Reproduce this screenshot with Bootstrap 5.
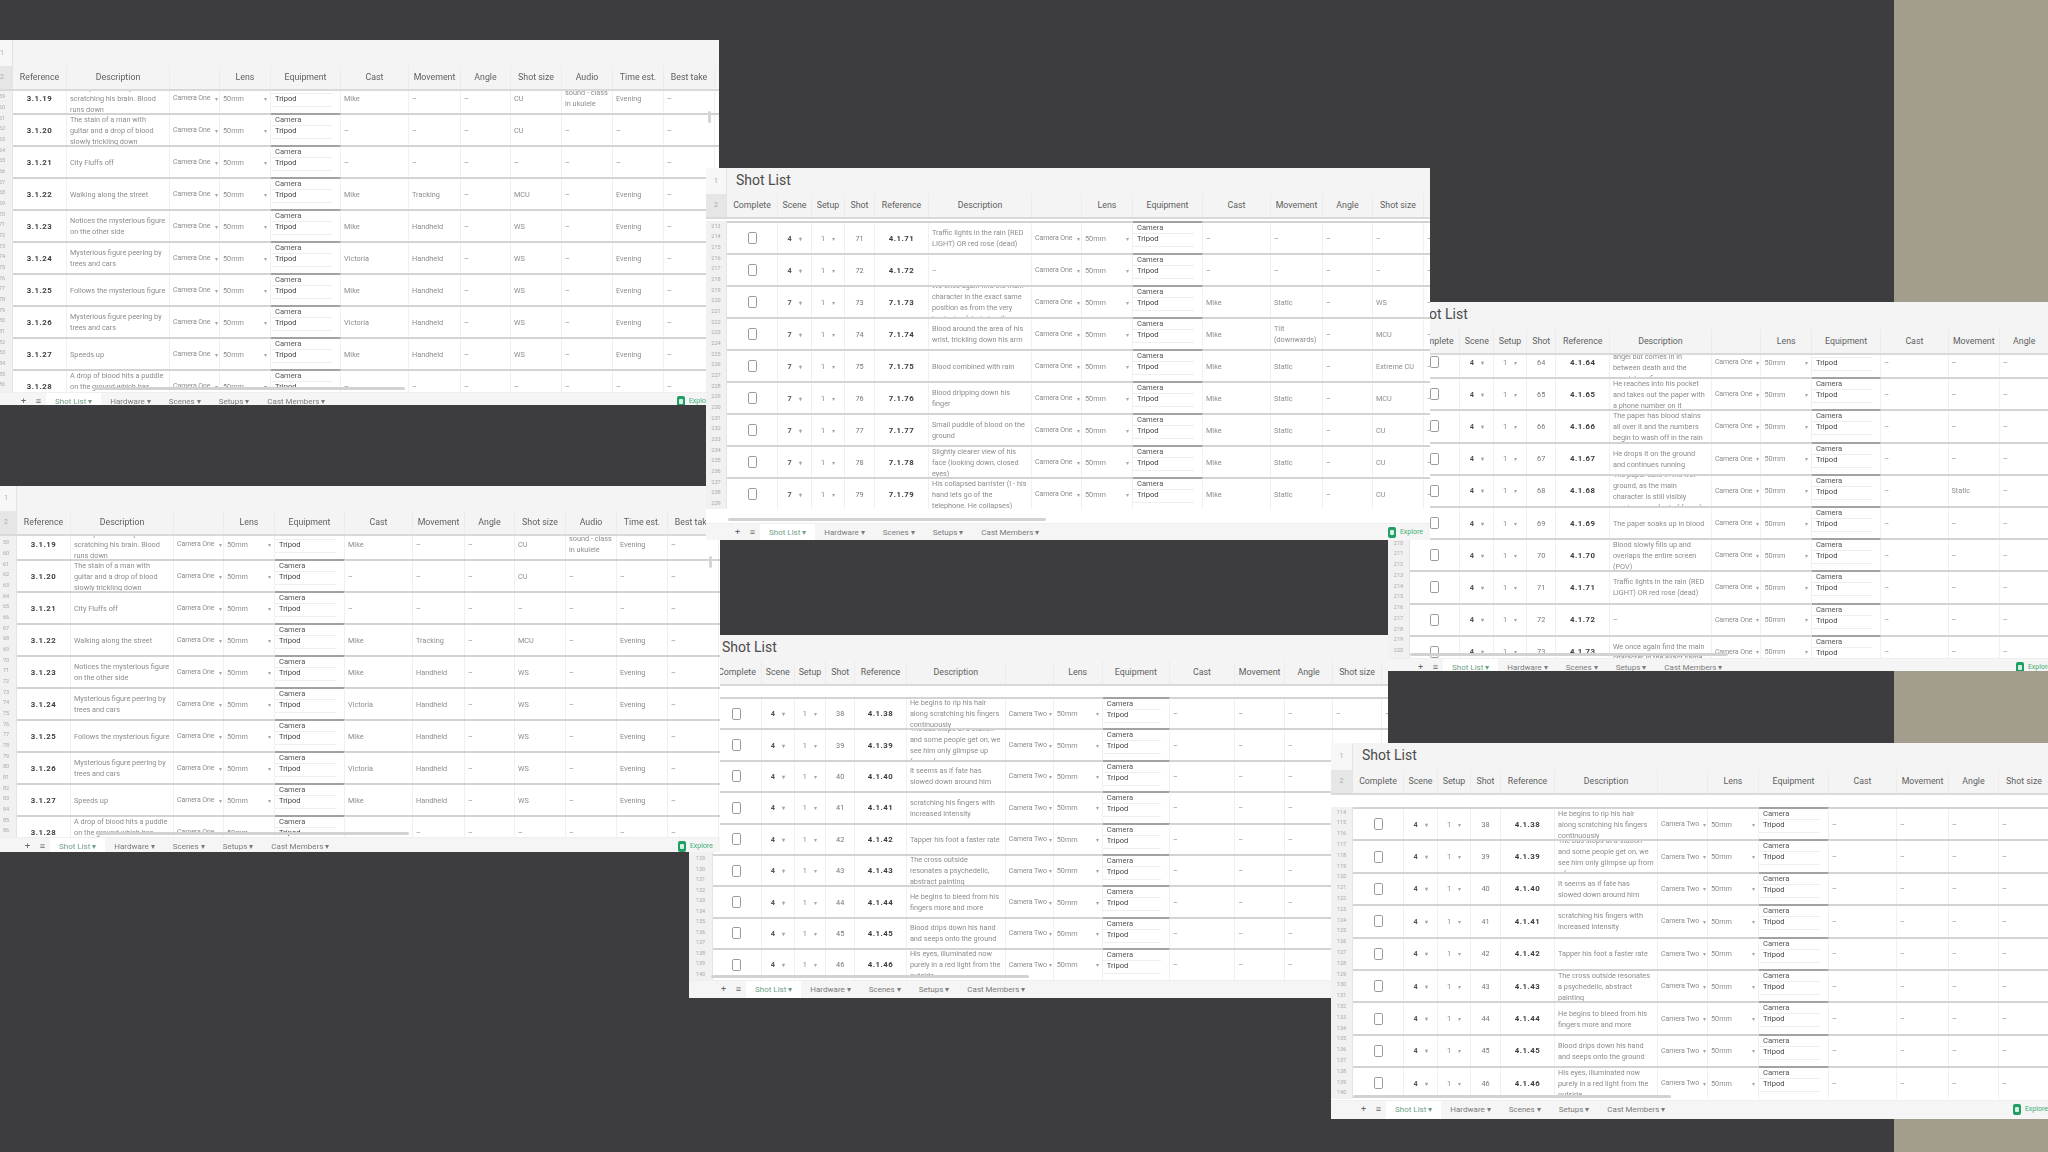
<!doctype html>
<html lang="en">
<head>
<meta charset="utf-8">
<title>Shot List</title>
<link href="https://cdn.jsdelivr.net/npm/bootstrap@5.3.0/dist/css/bootstrap.min.css" rel="stylesheet">
<style>
html,body{height:100%}
body{background:#3d3d3f;font-family:Roboto,"Liberation Sans",sans-serif;overflow:hidden}
.desk{width:2048px;height:1152px;position:relative;overflow:hidden}
.tan-band{position:absolute;left:1894px;top:0;width:154px;height:1152px;background:#a39d8d}
.win{position:absolute;background:#fff;overflow:hidden;display:flex;flex-direction:column;filter:blur(.65px);--u:1;--pitch:32px;--title:26px;--head:25px;--off:2px;--bar:17px;--rn:21px}
.w1{left:-8px;top:40px;width:727px;height:365px;z-index:1;--off:-10px;--bar:13px;--title:26px;--head:25px}
.w2{left:706px;top:168px;width:724px;height:372px;z-index:6}
.w3{left:1388px;top:302px;width:670px;height:369px;z-index:3;--u:.99;--pitch:32.2px;--title:27px;--head:26px;--off:-10px;--bar:13px;--rn:22px}
.w4{left:-4px;top:486px;width:724px;height:366px;z-index:4;--off:-9px;--bar:15px;--title:25px}
.w5{left:689px;top:635px;width:699px;height:363px;z-index:2;--u:.96;--pitch:31.4px;--title:26px;--off:11px;--bar:18px;--rn:24px}
.w6{left:1331px;top:743px;width:724px;height:376px;z-index:5;--pitch:32.4px;--title:27px;--off:12px;--bar:19px;--rn:22px}
.win-title,.win-head{display:flex;flex:none;background:#f4f4f4}
.win-title{height:var(--title)}
.win-head{height:var(--head);border-bottom:2px solid #d9d9d9}
.rn{flex:none;width:var(--rn);background:#f1f1f1;border-right:1px solid #e4e4e4;display:flex;flex-direction:column;align-items:center;justify-content:space-around;font-size:5.5px;line-height:1;color:#aaa}
.win-head .rn{background:#e6e6e6;font-size:7px}
.win-title .rn{background:#f7f7f7;font-size:7px}
.title-text{font-size:14px;line-height:1;color:#4b4b4b;padding:5px 0 0 9px;margin:0;font-weight:400;white-space:nowrap}
.w3 .title-text{padding-left:3px}
.cl{flex:none;border-right:1px solid #f0f0f0;font-size:7.3px;line-height:11px;color:#8d8d8d;overflow:hidden;display:flex;align-items:center;padding:0 3px}
.win-head .cl{font-size:8.8px;color:#5f5f5f;justify-content:center;padding:0;border-right-color:#ececec;white-space:nowrap}
.c-complete{width:calc(var(--u)*51px)}
.c-scene{width:calc(var(--u)*34px)}
.c-setup{width:calc(var(--u)*33px)}
.c-shot{width:calc(var(--u)*30px)}
.c-ref{width:calc(var(--u)*54px)}
.c-desc{width:calc(var(--u)*103px)}
.c-cam{width:calc(var(--u)*50px)}
.c-lens{width:calc(var(--u)*51px)}
.c-equip{width:calc(var(--u)*70px)}
.c-cast{width:calc(var(--u)*68px)}
.c-move{width:calc(var(--u)*52px)}
.c-angle{width:calc(var(--u)*50px)}
.c-size,.c-audio,.c-time,.c-best{width:calc(var(--u)*51px)}
.win-body{flex:1 1 0;min-height:0;overflow:hidden;position:relative}
.win-rows{margin-top:var(--off)}
.sheet-row{display:flex;height:var(--pitch);border-top:2px solid #d3d3d3}
.sheet-row .rn{margin-top:-2px}
.win-body .c-ref{color:#3d3d3d;font-weight:700;justify-content:center;font-size:7.8px;letter-spacing:.5px}
.win-body .c-scene,.win-body .c-setup{justify-content:center;gap:7px;color:#555;font-weight:700}
.win-body .c-setup{font-weight:400;color:#888}
.win-body .c-shot{justify-content:center;color:#777}
.win-body .c-complete{justify-content:center}
.win-body .c-cam,.win-body .c-lens{white-space:nowrap;justify-content:space-between;padding:0 3px}
.win-body .c-cam{padding-right:1px}
.win-body .c-cam span:first-child{font-size:7px;line-height:11px;letter-spacing:-.1px;padding-top:1px}
.drop{font-size:6px;color:#a5a5a5}
.tick{width:9px;height:12px;margin:0;border:1px solid #9a9a9a;border-radius:2px;background:#fff;flex:none}
.win-body .c-equip{flex-direction:column;align-items:stretch;justify-content:flex-start;padding:0;margin-top:-2px;border-top:2px solid #a2a2a2;color:#555;font-size:7.6px;line-height:8px}
.eq-top{padding:1px 4px 1px}
.eq-low{padding:1px 4px 3px;border-top:1px solid #eee;border-bottom:1px solid #eee;color:#444;margin-right:8px}
.win-bar{flex:none;height:var(--bar);overflow:hidden;background:#f5f5f5;border-top:1px solid #efefef}
.tab-strip{display:flex;height:18px;align-items:stretch;font-size:8px;color:#7b7b7b;white-space:nowrap;padding-left:calc(var(--rn) + 3px)}
.bar-icon{width:15px;text-align:center;line-height:17px;color:#666;font-size:9px}
.sheet-tab{padding:0 9px;line-height:17px}
.sheet-tab:first-of-type{margin-left:8px}
.sheet-tab.on{background:#fff;color:#6f9f86}
.explore{margin-left:auto;display:flex;align-items:center;gap:4px;color:#3fae77;font-size:7px;padding-right:7px;height:17px}
.explore-mark{width:8px;height:11px;background:#1f9f66;border-radius:2px;display:block;position:relative}
.explore-mark::after{content:"";position:absolute;left:2px;top:3px;width:4px;height:5px;background:#d6f3e3;border-radius:1px}
.hscroll{position:absolute;bottom:2px;height:3px;left:101px;width:312px;background:#d2d2d2;border-radius:2px}
.w2 .hscroll,.w5 .hscroll,.w6 .hscroll,.w3 .hscroll{left:22px;width:318px}
.vscroll{position:absolute;right:8px;top:20px;width:3px;height:12px;background:#d5d5d5;border-radius:2px}
</style>
</head>
<body>
<div class="desk" id="desk"><div class="tan-band"></div></div>
<script src="https://cdn.jsdelivr.net/npm/bootstrap@5.3.0/dist/js/bootstrap.bundle.min.js"></script>
<script>
const D='–';
const scene3=[
['3.1.19',"He's spasmodically scratching his brain. Blood runs down",'Mike',D,D,'CU','sound - class in ukulele','Evening',D],
['3.1.20','The stain of a man with guitar and a drop of blood slowly trickling down',D,D,D,'CU',D,D,D],
['3.1.21','City Fluffs off',D,D,D,D,D,D,D],
['3.1.22','Walking along the street','Mike','Tracking',D,'MCU',D,'Evening',D],
['3.1.23','Notices the mysterious figure on the other side','Mike','Handheld',D,'WS',D,'Evening',D],
['3.1.24','Mysterious figure peering by trees and cars','Victoria','Handheld',D,'WS',D,'Evening',D],
['3.1.25','Follows the mysterious figure','Mike','Handheld',D,'WS',D,'Evening',D],
['3.1.26','Mysterious figure peering by trees and cars','Victoria','Handheld',D,'WS',D,'Evening',D],
['3.1.27','Speeds up','Mike','Handheld',D,'WS',D,'Evening',D],
['3.1.28','A drop of blood hits a puddle on the ground which has been',D,D,D,D,D,D,D]];
const w2=[
[4,71,'4.1.71','Traffic lights in the rain (RED LIGHT) OR red rose (dead)',D,D,D,D],
[4,72,'4.1.72',D,D,D,D,D],
[7,73,'7.1.73','We once again find the main character in the exact same position as from the very beginning (shots level)','Mike','Static',D,'WS'],
[7,74,'7.1.74','Blood around the area of his wrist, trickling down his arm','Mike','Tilt (downwards)',D,'MCU'],
[7,75,'7.1.75','Blood combined with rain','Mike','Static',D,'Extreme CU'],
[7,76,'7.1.76','Blood dripping down his finger','Mike','Static',D,'MCU'],
[7,77,'7.1.77','Small puddle of blood on the ground','Mike','Static',D,'CU'],
[7,78,'7.1.78','Slightly clearer view of his face (looking down, closed eyes)','Mike','Static',D,'CU'],
[7,79,'7.1.79','His collapsed barrister (I - his hand lets go of the telephone. He collapses)','Mike','Static',D,'CU']];
const w3=[
[4,64,'4.1.64','up to yard and bird these angel but comes in in between death and the suspicious figure',D,D,D,D],
[4,65,'4.1.65','He reaches into his pocket and takes out the paper with a phone number on it',D,D,D,D],
[4,66,'4.1.66','The paper has blood stains all over it and the numbers begin to wash off in the rain',D,D,D,D],
[4,67,'4.1.67','He drops it on the ground and continues running',D,D,D,D],
[4,68,'4.1.68','The paper sails in the wet ground, as the main character is still visibly running away (out of focus)',D,'Static',D,D],
[4,69,'4.1.69','The paper soaks up in blood',D,D,D,D],
[4,70,'4.1.70','Blood slowly fills up and overlaps the entire screen (POV)',D,D,D,D],
[4,71,'4.1.71','Traffic lights in the rain (RED LIGHT) OR red rose (dead)',D,D,D,D],
[4,72,'4.1.72',D,D,D,D,D],
[4,73,'4.1.73','We once again find the main character in the exact same',D,D,D,D]];
const w56=[
[4,38,'4.1.38','He begins to rip his hair along scratching his fingers continuously'],
[4,39,'4.1.39','The bus stops at a station and some people get on, we see him only glimpse up from a far'],
[4,40,'4.1.40','It seems as if fate has slowed down around him'],
[4,41,'4.1.41','scratching his fingers with increased intensity'],
[4,42,'4.1.42','Tapper his foot a faster rate'],
[4,43,'4.1.43','The cross outside resonates a psychedelic, abstract painting'],
[4,44,'4.1.44','He begins to bleed from his fingers more and more'],
[4,45,'4.1.45','Blood drips down his hand and seeps onto the ground'],
[4,46,'4.1.46','His eyes, illuminated now purely in a red light from the outside']].map(r=>[...r,D,D,D,D]);

const full=[['c-complete','Complete'],['c-scene','Scene'],['c-setup','Setup'],['c-shot','Shot']];
const rest=[['c-ref','Reference'],['c-desc','Description'],['c-cam',''],['c-lens','Lens'],['c-equip','Equipment'],['c-cast','Cast'],['c-move','Movement'],['c-angle','Angle'],['c-size','Shot size'],['c-audio','Audio'],['c-time','Time est.'],['c-best','Best take']];
const drop='<span class="drop">▾</span>';
function cell(c,h){return `<div class="cl ${c}">${h}</div>`}
function common(ref,desc,cam){return cell('c-ref',ref)+cell('c-desc',`<span>${desc}</span>`)+cell('c-cam',`<span>${cam}</span>${drop}`)+cell('c-lens',`<span>50mm</span>${drop}`)+cell('c-equip','<div class="eq-top">Camera</div><div class="eq-low">Tripod</div>')}
function rowNums(n){return `<div class="rn"><span>${n}</span><span>${n+1}</span><span>${n+2}</span></div>`}
function wideRow(r,i,start,cam){
 const x=cell('c-complete','<input class="form-check-input tick" type="checkbox" aria-label="Complete">')+cell('c-scene',`<span>${r[0]}</span>${drop}`)+cell('c-setup',`<span>1</span>${drop}`)+cell('c-shot',r[1])+common(r[2],r[3],cam)+cell('c-cast',r[4])+cell('c-move',r[5])+cell('c-angle',r[6])+cell('c-size',r[7])+cell('c-audio',D)+cell('c-time',D)+cell('c-best',D);
 return `<div class="sheet-row">${rowNums(start+i*3)}${x}</div>`;
}
function shortRow(r,i,start){
 const x=common(r[0],r[1],'Camera One')+cell('c-cast',r[2])+cell('c-move',r[3])+cell('c-angle',r[4])+cell('c-size',r[5])+cell('c-audio',r[6])+cell('c-time',r[7])+cell('c-best',r[8]);
 return `<div class="sheet-row">${rowNums(start+i*3)}${x}</div>`;
}
function tabs(){return `<div class="tab-strip"><span class="bar-icon">+</span><span class="bar-icon">≡</span>`+
 ['Shot List','Hardware','Scenes','Setups','Cast Members'].map((t,i)=>`<span class="sheet-tab${i?'':' on'}">${t} ▾</span>`).join('')+
 `<span class="explore"><span class="explore-mark"></span>Explore</span></div>`}
function win(cls,title,cols,rows,vs){
 return `<section class="win ${cls}">
 <div class="win-title"><div class="rn">1</div>${title?'<h2 class="title-text">Shot List</h2>':''}</div>
 <div class="win-head"><div class="rn">2</div>${cols.map(c=>cell(c[0],c[1])).join('')}</div>
 <div class="win-body"><div class="win-rows">${rows}</div><div class="hscroll"></div>${vs?'<div class="vscroll"></div>':''}</div>
 <div class="win-bar">${tabs()}</div></section>`;
}
const wide=[...full,...rest];
const html=
 win('w1',false,rest,scene3.map((r,i)=>shortRow(r,i,58)).join(''),true)+
 win('w2',true,wide,w2.map((r,i)=>wideRow(r,i,213,'Camera One')).join(''))+
 win('w3',true,wide,w3.map((r,i)=>wideRow(r,i,192,'Camera One')).join(''))+
 win('w4',false,rest,scene3.map((r,i)=>shortRow(r,i,58)).join(''),true)+
 win('w5',true,wide,w56.map((r,i)=>wideRow(r,i,114,'Camera Two')).join(''))+
 win('w6',true,wide,w56.map((r,i)=>wideRow(r,i,114,'Camera Two')).join(''));
document.getElementById('desk').insertAdjacentHTML('beforeend',html);
</script>
</body>
</html>
